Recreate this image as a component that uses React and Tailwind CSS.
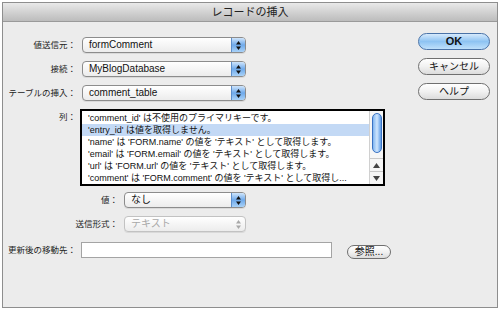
import React from "react";

const font = { fontFamily: '"Liberation Sans", "Noto Sans CJK JP", sans-serif' };

// Up/down arrows of the popup menu
const Arrows = ({ color = "#111" }) => (
  <svg width="7" height="11" viewBox="0 0 7 11">
    <path d="M3.5 1 L6 4.5 L1 4.5 Z" fill={color} />
    <path d="M3.5 10 L6 6.5 L1 6.5 Z" fill={color} />
  </svg>
);

const Select = ({ value, width, disabled }) => (
  <div
    className={`flex h-[16px] ${width} overflow-hidden rounded-[4px] border ${
      disabled ? "border-[#c2c2c2]" : "border-[#8c8c8c]"
    } bg-gradient-to-b from-white to-[#ececec] shadow-[0_1px_0_rgba(0,0,0,0.08)]`}
  >
    <span
      className={`flex-1 pl-[6px] text-[10px] leading-[14px] whitespace-nowrap ${
        disabled ? "text-[#a8a8a8]" : "text-[#111]"
      }`}
    >
      {value}
    </span>
    {disabled ? (
      <span className="flex w-[14px] items-center justify-center">
        <Arrows color="#a8a8a8" />
      </span>
    ) : (
      <span className="flex w-[14px] items-center justify-center border-l border-[#5d8fcc] bg-gradient-to-b from-[#cfe5fb] via-[#6ea9ea] to-[#a9d2f8]">
        <Arrows />
      </span>
    )}
  </div>
);

const Row = ({ label, labelWidth = "w-[75px]", children }) => (
  <div className="flex items-center">
    <span className={`${labelWidth} shrink-0 pr-[2px] text-right text-[8.5px] leading-[14px] text-[#222] whitespace-nowrap`}>
      {label}
    </span>
    <div className="ml-[4px]">{children}</div>
  </div>
);

const AquaButton = ({ children, primary, className = "" }) => (
  <button
    className={`flex items-center justify-center rounded-full border text-[10px] leading-none text-[#111] ${
      primary
        ? "border-[#4a73a8] bg-gradient-to-b from-[#d6eafc] via-[#8ec3f2] to-[#bfe0fb] font-semibold"
        : "border-[#6f6f6f] bg-gradient-to-b from-white via-[#f1f1f1] to-[#dcdcdc]"
    } ${className}`}
  >
    {children}
  </button>
);

const columns = [
  "'comment_id' は不使用のプライマリキーです。",
  "'entry_id' は値を取得しません。",
  "'name' は 'FORM.name' の値を 'テキスト' として取得します。",
  "'email' は 'FORM.email' の値を 'テキスト' として取得します。",
  "'url' は 'FORM.url' の値を 'テキスト' として取得します。",
  "'comment' は 'FORM.comment' の値を 'テキスト' として取得し...",
];

const ListBox = () => (
  <div className="flex h-[77px] w-[305px] border-2 border-black bg-white">
    <div className="flex-1 overflow-hidden pt-[1px]">
      {columns.map((c, i) => (
        <div
          key={c}
          className={`h-[12px] pl-[6px] text-[9px] leading-[12px] text-[#111] whitespace-nowrap ${
            i === 1 ? "bg-[#c3d9f5]" : ""
          }`}
        >
          {c}
        </div>
      ))}
    </div>
    <div className="flex w-[14px] flex-col border-l border-[#d0d0d0] bg-[#f6f6f6]">
      <div className="flex flex-1 justify-center pt-[2px]">
        <div className="h-[40px] w-[10px] rounded-full border border-[#3a73c4] bg-gradient-to-r from-[#7fb4f0] via-[#cfe6fd] to-[#5d9be6]" />
      </div>
      <div className="flex h-[13px] items-center justify-center border-t border-[#c8c8c8]">
        <svg width="7" height="5" viewBox="0 0 7 5">
          <path d="M3.5 0 L7 5 L0 5 Z" fill="#444" />
        </svg>
      </div>
      <div className="flex h-[13px] items-center justify-center border-t border-[#c8c8c8]">
        <svg width="7" height="5" viewBox="0 0 7 5">
          <path d="M3.5 5 L7 0 L0 0 Z" fill="#444" />
        </svg>
      </div>
    </div>
  </div>
);

export default function App() {
  return (
    <div className="h-[311px] w-[500px] bg-white pl-[2px] pt-[2px]" style={font}>
      <div className="flex h-[306px] w-[496px] flex-col border border-[#8e8e8e]">
        <div className="flex h-[19px] items-center justify-center border-b border-[#9a9a9a] bg-gradient-to-b from-[#e9e9e9] to-[#bcbcbc] text-[11px] text-[#222]">
          レコードの挿入
        </div>
        <div className="flex flex-1 bg-[#ececec]">
          <div className="flex w-[410px] flex-col pt-[15px]">
            <div className="flex flex-col gap-[8px]">
              <Row label="値送信元：">
                <Select value="formComment" width="w-[164px]" />
              </Row>
              <Row label="接続：">
                <Select value="MyBlogDatabase" width="w-[164px]" />
              </Row>
              <Row label="テーブルの挿入：">
                <Select value="comment_table" width="w-[164px]" />
              </Row>
            </div>
            <div className="mt-[8px] flex">
              <span className="w-[73px] shrink-0 pt-[1px] text-right text-[8.5px] leading-[14px] text-[#222]">
                列：
              </span>
              <div className="ml-[4px]">
                <ListBox />
              </div>
            </div>
            <div className="mt-[6px] flex flex-col gap-[8px]">
              <Row label="値：" labelWidth="w-[117px]">
                <Select value="なし" width="w-[122px]" />
              </Row>
              <Row label="送信形式：" labelWidth="w-[117px]">
                <Select value="テキスト" width="w-[122px]" disabled />
              </Row>
              <div className="flex items-center">
                <span className="w-[75px] shrink-0 pr-[2px] text-right text-[8.5px] leading-[14px] text-[#222] whitespace-nowrap">
                  更新後の移動先：
                </span>
                <div className="ml-[3px] h-[16px] w-[251px] border border-[#a4a4a4] bg-white" />
                <AquaButton className="ml-[15px] mt-[5px] h-[14px] w-[44px] text-[9px]">参照...</AquaButton>
              </div>
            </div>
          </div>
          <div className="flex flex-col gap-[8px] pl-[5px] pt-[11px]">
            <AquaButton primary className="h-[17px] w-[72px] text-[11px]">
              OK
            </AquaButton>
            <AquaButton className="h-[17px] w-[72px]">キャンセル</AquaButton>
            <AquaButton className="h-[17px] w-[72px]">ヘルプ</AquaButton>
          </div>
        </div>
      </div>
    </div>
  );
}
